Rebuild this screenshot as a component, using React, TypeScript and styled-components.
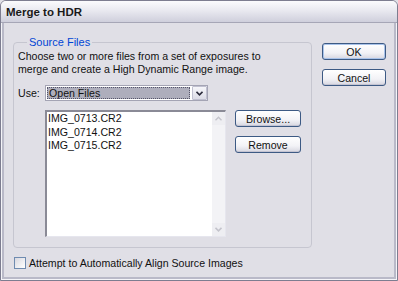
import React from "react"
import styled, { createGlobalStyle } from "styled-components"

const GlobalStyle = createGlobalStyle`
  html, body {
    margin: 0;
    padding: 0;
    background: #e0dfe6;
  }
  body {
    font-family: "Liberation Sans", Arial, sans-serif;
    font-size: 10.6px;
    color: #111;
  }
`

const Window = styled.div`
  width: 398px;
  height: 281px;
  box-sizing: border-box;
  border: 1px solid #7d7d90;
  border-radius: 6px 6px 0 0;
  background: #e0dfe6;
  box-shadow: inset -1px -1px 0 #f4f4f8, inset 1px 1px 0 #f4f4f8, inset -3px -3px 0 #b9b9c8, inset 3px 3px 0 #b9b9c8;
  overflow: hidden;
  display: flex;
  flex-direction: column;
`

const TitleBar = styled.div`
  height: 22px;
  flex: none;
  box-sizing: border-box;
  padding: 1px 0 0 5px;
  display: flex;
  align-items: center;
  font-weight: bold;
  font-size: 11.5px;
  color: #1a1a1a;
  background: linear-gradient(#fbfbfd 0%, #e9e9f0 45%, #cfcfdc 100%);
  border-bottom: 1px solid #a6a6b6;
`

const Body = styled.div`
  flex: 1;
  display: flex;
  padding: 13px 0 0 12px;
`

const LeftCol = styled.div`
  width: 299px;
  display: flex;
  flex-direction: column;
`

const Group = styled.fieldset`
  margin: 0;
  padding: 2px 0 9px 4px;
  height: 212px;
  box-sizing: border-box;
  border: 1px solid #c6c6d0;
  border-radius: 4px;
`

const Legend = styled.legend`
  color: #0046d5;
  padding: 0 2px;
  margin-left: 9px;
  font-size: 11px;
`

const Intro = styled.p`
  margin: 0;
  line-height: 13px;
`

const UseRow = styled.div`
  display: flex;
  align-items: center;
  margin-top: 9px;
  height: 16px;
`

const UseLabel = styled.span`
  width: 27px;
`

const Select = styled.div`
  width: 163px;
  height: 16px;
  box-sizing: border-box;
  border: 1px solid #a4a4b4;
  background: #fff;
  display: flex;
  padding: 1px;
  gap: 2px;
`

const SelectValue = styled.div`
  flex: 1;
  background: #aeaebc;
  outline: 1px dotted #55556a;
  outline-offset: -1px;
  padding-left: 2px;
  line-height: 12px;
`

const ArrowBtn = styled.div`
  width: 13px;
  display: flex;
  align-items: center;
  justify-content: center;
  background: linear-gradient(#f6f6fa, #dcdce6);
  border: 1px solid #c0c0d0;
  border-radius: 1px;
  margin: -1px -1px -1px 0;
`

const ListRow = styled.div`
  display: flex;
  margin-top: 9px;
  margin-left: 27px;
  gap: 9px;
`

const ListBox = styled.div`
  width: 181px;
  height: 127px;
  box-sizing: border-box;
  border-top: 2px solid #8a8a96;
  border-left: 2px solid #8a8a96;
  border-right: 1px solid #e6e6ee;
  border-bottom: 1px solid #e6e6ee;
  background: #fff;
  display: flex;
`

const Items = styled.div`
  flex: 1;
  padding: 0 0 0 1px;
`

const Item = styled.div`
  line-height: 13.5px;
`

const ScrollBar = styled.div`
  width: 13px;
  background: #f3f3f6;
  display: flex;
  flex-direction: column;
  justify-content: space-between;
`

const ScrollArrow = styled.div`
  height: 13px;
  display: flex;
  align-items: center;
  justify-content: center;
  background: #eeeef2;
`

const SideButtons = styled.div`
  display: flex;
  flex-direction: column;
  gap: 9px;
`

const Button = styled.button<{ $w: number; $default?: boolean }>`
  width: ${(p) => p.$w}px;
  height: 17px;
  box-sizing: border-box;
  padding: 0;
  font-family: "Liberation Sans", Arial, sans-serif;
  font-size: 10.6px;
  color: #111;
  border: 1px solid #3d5a84;
  border-radius: 3px;
  background: linear-gradient(#ffffff 0%, #f2f2f6 60%, #d6d6e0 100%);
  box-shadow: ${(p) => (p.$default ? "inset 0 0 0 1px #a9c3ea" : "inset 0 -1px 0 #c4c4d2")};
`

const RightCol = styled.div`
  display: flex;
  flex-direction: column;
  gap: 9px;
  margin-left: 10px;
  padding-top: 7px;
`

const CheckRow = styled.label`
  display: flex;
  align-items: center;
  gap: 3px;
  margin-top: 9px;
  margin-left: 1px;
`

const Box = styled.span`
  width: 10px;
  height: 10px;
  border: 1px solid #6f8bb0;
  background: linear-gradient(135deg, #d8d8e0, #ffffff);
`

const Chevron = ({ color }: { color: string }) => (
  <svg width="7" height="5" viewBox="0 0 7 5">
    <path d="M0.5 0.8 L3.5 3.8 L6.5 0.8" fill="none" stroke={color} strokeWidth="1.6" />
  </svg>
)

const ChevronUp = ({ color }: { color: string }) => (
  <svg width="7" height="5" viewBox="0 0 7 5">
    <path d="M0.5 4.2 L3.5 1.2 L6.5 4.2" fill="none" stroke={color} strokeWidth="1.4" />
  </svg>
)

const App = () => {
  const files = ["IMG_0713.CR2", "IMG_0714.CR2", "IMG_0715.CR2"]
  return (
    <>
      <GlobalStyle />
      <Window>
        <TitleBar>Merge to HDR</TitleBar>
        <Body>
          <LeftCol>
            <Group>
              <Legend>Source Files</Legend>
              <Intro>
                Choose two or more files from a set of exposures to
                <br />
                merge and create a High Dynamic Range image.
              </Intro>
              <UseRow>
                <UseLabel>Use:</UseLabel>
                <Select>
                  <SelectValue>Open Files</SelectValue>
                  <ArrowBtn>
                    <Chevron color="#2c2c3c" />
                  </ArrowBtn>
                </Select>
              </UseRow>
              <ListRow>
                <ListBox>
                  <Items>
                    {files.map((f) => (
                      <Item key={f}>{f}</Item>
                    ))}
                  </Items>
                  <ScrollBar>
                    <ScrollArrow>
                      <ChevronUp color="#c4c4cc" />
                    </ScrollArrow>
                    <ScrollArrow>
                      <Chevron color="#c4c4cc" />
                    </ScrollArrow>
                  </ScrollBar>
                </ListBox>
                <SideButtons>
                  <Button $w={66}>Browse...</Button>
                  <Button $w={66}>Remove</Button>
                </SideButtons>
              </ListRow>
            </Group>
            <CheckRow>
              <Box />
              Attempt to Automatically Align Source Images
            </CheckRow>
          </LeftCol>
          <RightCol>
            <Button $w={64} $default>OK</Button>
            <Button $w={64}>Cancel</Button>
          </RightCol>
        </Body>
      </Window>
    </>
  )
}

export default App
